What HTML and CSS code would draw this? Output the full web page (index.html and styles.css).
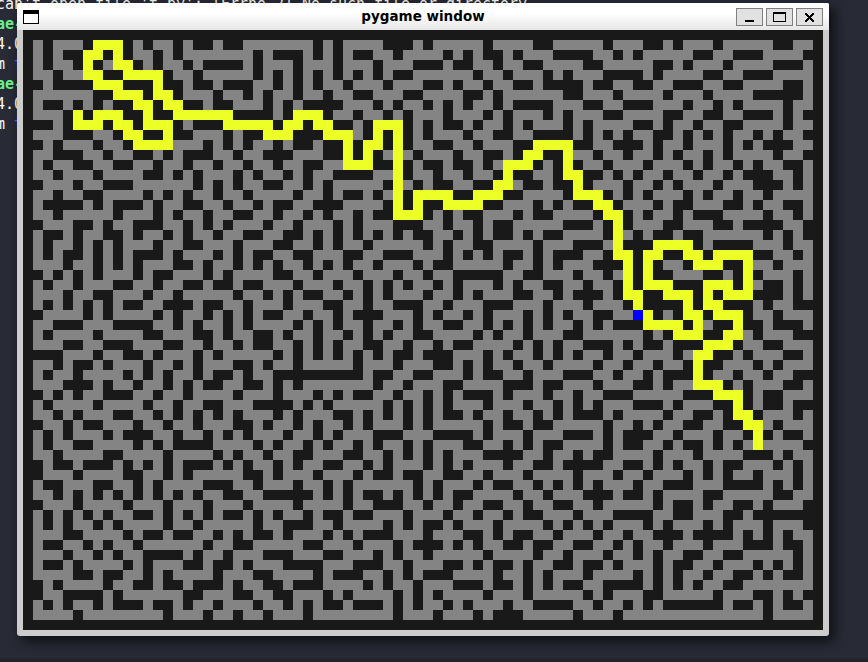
FILE: index.html
```
<!DOCTYPE html>
<html lang="en">
<head>
<meta charset="utf-8">
<title>pygame window</title>
<link rel="stylesheet" href="styles.css">
</head>
<body>
<div class="terminal">
  <div class="line">can't open file 't.py': [Errno 2] No such file or directory</div>
  <div class="line prompt">ae-</div>
  <div class="line">4.0</div>
  <div class="line">m <span class="arg">t</span></div>
  <div class="line prompt">ae-</div>
  <div class="line">4.0</div>
  <div class="line">m <span class="arg">t</span></div>
</div>
<div class="status"></div>
<div class="window">
  <header class="titlebar">
    <span class="menu"></span>
    <h1 class="title">pygame window</h1>
    <div class="buttons">
      <span class="button"><svg width="25" height="16" shape-rendering="crispEdges"><rect x="8" y="11" width="9" height="2"/></svg></span>
      <span class="button"><svg width="25" height="16" shape-rendering="crispEdges"><path fill-rule="evenodd" d="M6 3h13v10H6zM7 5v7h11V5z"/></svg></span>
      <span class="button"><svg width="25" height="16" shape-rendering="crispEdges"><path d="M8 4h2v1h1v1h1v1h1v-1h1v-1h1v-1h2v2h-1v1h-1v1h-1v1h1v1h1v1h1v2h-2v-1h-1v-1h-1v-1h-1v1h-1v1h-1v1h-2v-2h1v-1h1v-1h1v-1h-1v-1h-1v-1h-1z"/></svg></span>
    </div>
  </header>
  <svg class="maze" id="maze" viewBox="0 0 80 60" width="800" height="600" shape-rendering="crispEdges"></svg>
</div>
<script src="maze.js"></script>
</body>
</html>
```
FILE: styles.css
```
* { box-sizing: border-box; }

body {
  margin: 0;
  width: 868px;
  height: 662px;
  overflow: hidden;
  position: relative;
  background: #282a36;
}

.terminal {
  position: absolute;
  left: -4px;
  top: -6px;
  font: 15px/20px "DejaVu Sans Mono", monospace;
  letter-spacing: -0.03px;
  color: #f8f8f2;
}

.line { height: 20px; white-space: pre; }
.prompt { color: #69f08c; font-weight: bold; }
.arg { color: #4a5fe0; }

.status {
  position: absolute;
  left: 0;
  right: 0;
  bottom: 0;
  height: 4px;
  background: #20222c;
}

.window {
  position: absolute;
  left: 17px;
  top: 3px;
  width: 812px;
  height: 633px;
  padding: 0 6px 6px;
  background: #cccccc;
  border-radius: 2px 2px 3px 3px;
  box-shadow: 5px 5px 12px 1px rgba(0, 0, 0, 0.6);
}

.titlebar {
  display: grid;
  grid-template-columns: 87px 1fr 87px;
  align-items: center;
  height: 27px;
  margin: 0 -6px;
  padding: 0 6px;
  background: linear-gradient(#ffffff 40%, #e6e6e6);
  border-radius: 2px 2px 0 0;
}

.menu {
  width: 16px;
  height: 14px;
  margin-top: 1px;
  border: 1px solid #000;
  border-top-width: 4px;
  background: #fff;
}

.title {
  margin: 0 0 2px;
  font: bold 13.5px/24px "DejaVu Sans", sans-serif;
  text-align: center;
  color: #000;
}

.buttons { display: flex; gap: 3px; margin-top: 1px; }

.button {
  width: 27px;
  height: 18px;
  border: 1px solid #808080;
  background: #e1e1e1;
}

.button svg { display: block; }

.maze { display: block; background: #191919; }
.open { fill: #848484; }
.path { fill: #ecff27; }
.head { fill: #0000ff; }
```
FILE: maze.js
```
// # wall, . open cell, Y solved path, B current position
const rows = `
########################### ########################### ##########################
#.#...#YYY#.#..#.##.##..... ..#.#....###.#.....#....##. ....#...##.#...#.....##..#
#.#.##YY#Y#..#.#.......#.## #.#.#.##..#....#.#.##.#...# ###..#.#.....##..###....##
#.#..#Y#.YY#.#..#.####.#... #...#...#...###.##..#..##.. ..##.....##.#...#....###.#
#..#..YY##YYYY#..#.....#.#. #.#.#.#.#.##......#..#...#. #...####.#....##..###....#
##.####YYY###Y##.##.###..#. #.#..#...#...##.#..#..##.## ##.##..##..###..##....##.#
#......##YYY#YY#...#..#.#.. #..#..##...##....##.#...... ##...#....#...#....#####.#
#.##.#.#.##YY#YY##.##...#.# .####...#.#..#.#.#..#.####. ..##..###...#..#.#....#..#
#...#Y#YYY##Y##YYYYYY####.# YYY#..#..#.#...#...#.#...#. #...##....##..##..###.#.##
###.#YYY#YY#YYY#.###YYYYY#Y Y#YY##.#YYY#.#.##.#..#.#... #.#....##.#..#..##....#..#
#...###..#YY##Y##...#.##YYY ###YYY.#Y#Y#.#...#..##..### #.#.#.#..##.#.#.#..#.#..##
##.#...#..#YYYY...#.#.#..#. ##.##Y#YY#Y#..##..#...##YYY Y##..###.#..#...#.#.###..#
#..###..#..##.#.###..#..### ...##Y#Y#.Y.#...#..##.#YY## Y..#..#..#.#..#.#....#..##
#.#..##..##..#..#..#..#..#. .##..YYY##Y#.##.##.#.YYY#.# Y#..#...#...#.#..#.#..##.#
#..#...#....##.#.#...#.#..# .#..####..Y#..#..#..#Y##..# YY##.#.#..#..#..#.###..#.#
##...#..###......#.#.#..##. .#.#.....#Y.#.##..##YY.##.# #Y#...#..#.#...#...###.#.#
#..#..##....#.#.#..#..#.... #..#.##.#.Y#YYYY##YYY##.... #YYY#.#.#...#.#..#..#....#
#.####.#.###.#..##..#..#.## ..###....#Y#Y##YYYY##...#.# .##YY#...#.##...##.#..##.#
#..#.....#...#.#..#..##..#. .#.#..#.##YYY#.#.##...#.##. ...#YY#.#..#.###....#..#.#
##...##.#..###..#.#.#...#.. #...#.#...###..#..#.##..... ###.#Y#...##...##.####..##
#.##.#..##.#..#.#..#..##..# #.#.#.#.#.#.##..#.#.##.#.## ....#Y.#.##.##......#.#.##
#.#..#.#.#...#..##...#...## ..#.#..#.....#.#..##....#.. .###.Y###YYYY#.####...#..#
#.#.##.#.#.###.#...#.#.##.. ##...##..###...#.#.#.##.#.# ##..#YY#YY##YY#YYYY##..#.#
#...#..#.#.#...##.#..#.#.#. .#.#.#..#...#.##.....#..#.# ...###Y#Y#..#YYY##Y..#...#
##.#.#.#...#.##...#.#....## ..#...#...#..#..#####..##.. .#..#.Y#Y##...##.#Y#...#.#
#.#..#...##..#..##.##.##... #...#..#.#.#..#.#...#.#..## ..#..#Y#YYY###YYY#Y.##.#.#
#...#..##...#..#.....#..#.# .##..#.#.#...#..#.#...##..# .###.#YY##YYY#Y#YYY###.#.#
#.#.#.#.#.##..###.##..#...# ...##..#..###..#...###...#. ..#...#Y####Y#YY###.#..###
##....#.#....#.#..#.#.#.##. .#..#.###...#.#..#.#...#.#. #..##..BY#.#YY#YYY#..#...#
#..###...####..#.#..#.#.... #.#.#..#..#.#..##..#.#.#.#. .#.#.###YYYY#Y.##Y##.###.#
#.#....#....##...##.#..##.# ..#..#.#.#..##....#.#..#... ##......#.#YYY##YY.#...###
#...##..###...##..#..#.##.. #.#.#..##..#..#.##....#.#.# ..###.#.##.###YYY#..##...#
####...#..##.#...#.#.....#. #.#.#.#.#.##.###...#.#..#.# .#..#..#...#.YY##.#...##.#
#..#.##.#...#..#.#...##.#.. #.....#...#...##.#.#..#..#. ...#..#..#..#Y##...#.#...#
#.#..#....#.#.#..#.##.#..## #######.##..##...#.##..#... ###..#..#.###Y#..#..#..###
#...###.#..#..#.#.##..##.#. #.......#..#...##....###.## ...#...##.#..YYY#.#...##.#
##.#.#..###..#..#....#...#. ..#.#.##..#..#.#.###.#...#. .#..###.....###YYY#.##...#
#.#....#....#..#..##...#### .#.#.....#.#.#.#...#...#..# .#.#...###.#...##Y#.##.###
#..#.#...##..#.#.#.#.#...#. #...##.#.#.#.#.##.#..#..#.# .###.#....#..##.#YY#...#.#
##..#.##...#..#..#...##.#.. #.#..#.#...#.#.....#.##.##. ....#..#.#..##..##YY.#...#
#.#.#...#.###..#..#.#.#...# ..#.#...###...####.#...#... ###.#.###..#...#..#Y#.##.#
#.#..##....#.#.####....#.#. .#.#..#.#..#.#...##..#.#.## ....#.##..#.##.#.#.Y....##
#..#....##....#....#.#..#.. ##...##..#.#.#.#...####..#. .#.##....#...#....###.#..#
##.##.###.#.#.#.###.#.#..#. #..##..#.#...#.#.#...#..##. ####..##.#.#..#.##...#.#.#
##...#....##..#.#.....##.#. ..#...#.##.##..##..#...#... .#...#..#...#.#.#..#...#.#
#.##...##..#.#....###..#... #..#.#......#.#...#.##..#.# .#.#...#..###...####.#.#.#
#..#.#.#.#.#.#.#.#..##..### ##.#.#.##.#.#.#.##....#..#. ..###.##.#....##.....##..#
##...#....#...#...#...#.... #....#..###..#..#..##..#..# #..#.....#.##.#..##.#...##
#.#.#.#.#..##.#.#.#.##.#.#. .#.##.##...#...#..#..#.##.. .#...####..##...##.#######
#.#.#..#.#....#..#.....#..# ##..#....#.#.##.#...#....#. #.#.#...#.#...#.#...#...##
#...##....#.##.##..#.#.##.# ...#.#.###...#...##.#.##..# ...#..#..###.####.#.#.#..#
#.##..#.#..#......#..##.... .##...#...#.###.#.#..##.##. .##..#.#..#...#...###.##.#
#...#..#.#..####.#..#...### ...##...#.#..#.....#....#.. #...#..#.#..##..##.....#.#
#.##.#....#.#...##.##.#...# ###...###..#...##.#.##.#..# #.##.#...#.##..#...#.#.#.#
#....##.##..#.#....#...##.. ..#.###..#.#.###....#..#.#. ..#....#.#.#..#..##.#.##.#
##.#....#..##.##.###.#..##. ###....#.#..#...###.##.#.#. ##..####.#.#.#..##.......#
##..####.#......##...##..## ...#.#....#.#.#....#...#... ..#.#...##.....#...##.#.##
#.#.#..#.###.##.#..#...#..# .#.##.###.#.#..#.#...#..### #..#..#.#.######.##.#.##.#
#....#........#...#..#..#.. .#........#...#...#.###.... .#...#..............#....#
########################### ########################### ##########################
`.trim().split("\n").map(row => row.replace(/ /g, ""));

const kinds = { ".": "open", "Y": "path", "B": "head" };
const outlines = { open: "", path: "", head: "" };

rows.forEach((row, y) => {
  for (const run of row.matchAll(/\.+|Y+|B+/g)) {
    const width = run[0].length;
    outlines[kinds[run[0][0]]] += `M${run.index} ${y}h${width}v1h-${width}z`;
  }
});

const maze = document.getElementById("maze");
for (const [kind, d] of Object.entries(outlines)) {
  const shape = document.createElementNS("http://www.w3.org/2000/svg", "path");
  shape.setAttribute("class", kind);
  shape.setAttribute("d", d);
  maze.appendChild(shape);
}
```
